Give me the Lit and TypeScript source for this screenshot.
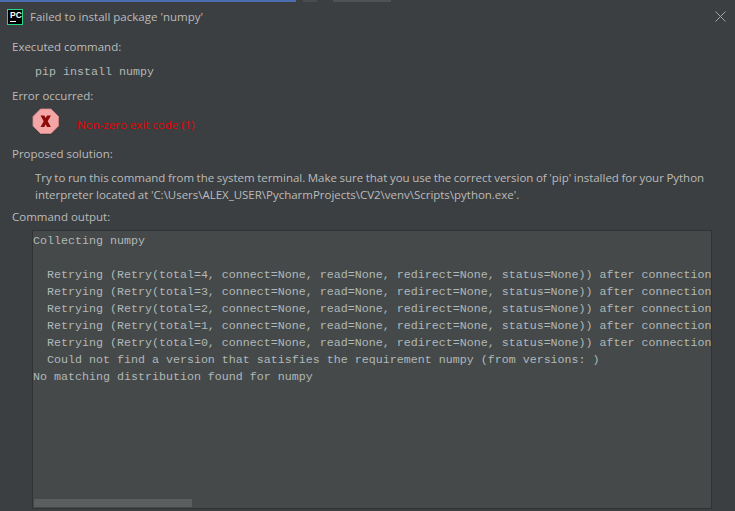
import { LitElement, html, css } from "lit";
import { customElement } from "lit/decorators.js";

const retry = (n: number) =>
  `  Retrying (Retry(total=${n}, connect=None, read=None, redirect=None, status=None)) after connection broken by 'ConnectTimeoutError'`;

@customElement("app-root")
export class AppRoot extends LitElement {
  static styles = css`
    :host {
      display: block;
      width: 735px;
      height: 511px;
      overflow: hidden;
      background: #3c3f41;
      color: #bbbbbb;
      font-family: "Open Sans", "Noto Sans", sans-serif;
      font-size: 11.5px;
    }
    .dialog {
      height: 511px;
      display: flex;
      flex-direction: column;
      box-sizing: border-box;
    }
    .strip {
      height: 2px;
      display: flex;
      flex: none;
    }
    .strip .blue {
      width: 296px;
      background: #4b6eaf;
    }
    .strip .a {
      width: 14px;
      margin-left: 7px;
      background: #4a4d4f;
    }
    .strip .b {
      width: 58px;
      margin-left: 16px;
      background: #4f5254;
    }
    .title {
      height: 29px;
      display: flex;
      align-items: center;
      padding: 0 9px 0 7px;
      gap: 7px;
      flex: none;
    }
    .title .name {
      flex: 1;
    }
    .logo {
      width: 16px;
      height: 16px;
      background: #000;
      border: 1px solid #21d789;
      box-sizing: border-box;
      position: relative;
      color: #fff;
      font: bold 8.5px/8px "Liberation Sans", sans-serif;
      padding: 1px 0 0 2px;
      flex: none;
    }
    .logo i {
      position: absolute;
      left: 2px;
      bottom: 2px;
      width: 6px;
      height: 1px;
      background: #fff;
    }
    .body {
      flex: 1;
      min-height: 0;
      display: flex;
      flex-direction: column;
      padding: 7px 23px 2px 12px;
    }
    .label {
      height: 17px;
      line-height: 17px;
      flex: none;
    }
    .cmd {
      margin: 9px 0 6px 23px;
      height: 17px;
      line-height: 17px;
      font-family: "Liberation Mono", monospace;
      font-size: 11.67px;
      color: #b0b8b8;
      white-space: pre;
      flex: none;
    }
    .error {
      display: flex;
      align-items: flex-start;
      height: 32px;
      margin: 4px 0 5px 20px;
      gap: 17px;
      color: #e80000;
      flex: none;
    }
    .error span {
      margin-top: 8px;
      line-height: 17px;
    }
    .para {
      margin: 7px 0 5px 23px;
      line-height: 17px;
      white-space: nowrap;
      word-spacing: -0.39px;
      letter-spacing: -0.016px;
      flex: none;
    }
    .output {
      flex: 1;
      min-height: 0;
      margin: 5px 0 0 20px;
      background: #45494a;
      border: 1px solid #323232;
      position: relative;
      overflow: hidden;
      font-family: "Liberation Mono", monospace;
      font-size: 11.67px;
      line-height: 17px;
      color: #b0b8b8;
      padding-top: 2px;
    }
    .line {
      height: 17px;
      white-space: pre;
    }
    .thumb {
      position: absolute;
      left: 1px;
      bottom: 1px;
      width: 158px;
      height: 8px;
      background: #5a5e5f;
    }
    svg {
      display: block;
      flex: none;
    }
  `;

  render() {
    return html`
      <div class="dialog">
        <div class="strip"><div class="blue"></div><div class="a"></div><div class="b"></div></div>
        <div class="title">
          <div class="logo">PC<i></i></div>
          <div class="name">Failed to install package 'numpy'</div>
          <svg width="11" height="11" viewBox="0 0 11 11">
            <path d="M.5.5l10 10M10.5.5l-10 10" stroke="#a0a3a5" fill="none" />
          </svg>
        </div>
        <div class="body">
          <div class="label">Executed command:</div>
          <div class="cmd">pip install numpy</div>
          <div class="label">Error occurred:</div>
          <div class="error">
            <svg width="28" height="28" viewBox="0 0 28 28">
              <polygon points="9,2 19,2 27,9 27,19 19,27 9,27 2,19 2,9" fill="#24262a" opacity=".45" />
              <polygon points="8.5,1 19,1 26.5,8.5 26.5,18 19,25.5 8.5,25.5 1,18 1,8.5" fill="#f4a5a5" stroke="#d98a8a" stroke-width=".8" />
              <path d="M8.5 7.5h3.8l1.4 2.6 1.4-2.6h3.8l-3.2 5.7 3.2 5.8h-3.8l-1.4-2.7-1.4 2.7H8.5l3.2-5.8z" fill="#8c0a0a" />
            </svg>
            <span>Non-zero exit code (1)</span>
          </div>
          <div class="label">Proposed solution:</div>
          <div class="para">
            Try to run this command from the system terminal. Make sure that you use the correct version of 'pip' installed for your Python<br />
            interpreter located at 'C:\\Users\\ALEX_USER\\PycharmProjects\\CV2\\venv\\Scripts\\python.exe'.
          </div>
          <div class="label">Command output:</div>
          <div class="output">
            <div class="line">Collecting numpy</div>
            <div class="line"></div>
            ${[4, 3, 2, 1, 0].map((n) => html`<div class="line">${retry(n)}</div>`)}
            <div class="line">  Could not find a version that satisfies the requirement numpy (from versions: )</div>
            <div class="line">No matching distribution found for numpy</div>
            <div class="thumb"></div>
          </div>
        </div>
      </div>
    `;
  }
}
